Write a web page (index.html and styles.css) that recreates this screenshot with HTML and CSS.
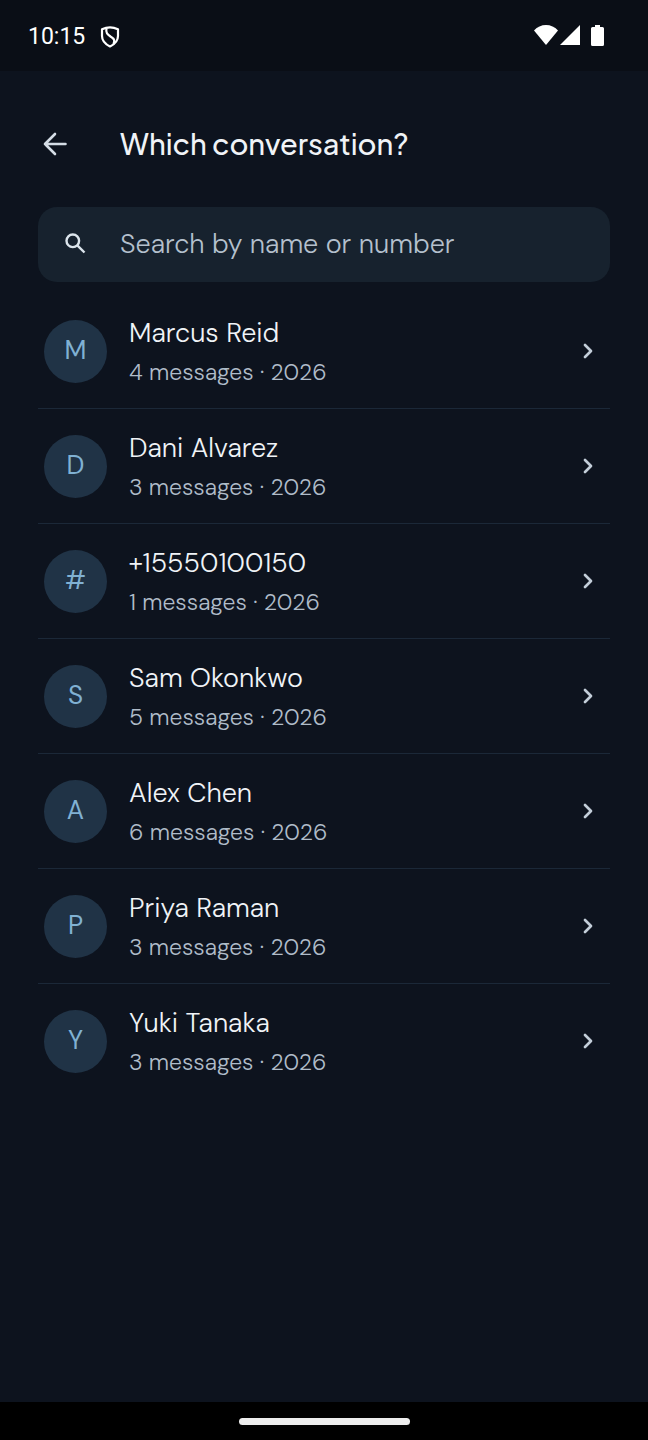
FILE: index.html
```
<!DOCTYPE html>
<html lang="en">
<head>
<meta charset="utf-8">
<meta name="viewport" content="width=device-width, initial-scale=1">
<title>Which conversation?</title>
<link rel="stylesheet" href="styles.css">
</head>
<body>
<svg class="sprite" aria-hidden="true">
  <symbol id="chevron" viewBox="0 0 24 24"><path d="M9 6l6 6-6 6" fill="none" stroke="currentColor" stroke-width="2.7" stroke-linecap="round" stroke-linejoin="round"/></symbol>
</svg>
<div class="status-bar">
  <span class="clock">10:15</span>
  <svg class="shield" viewBox="0 0 20 22" fill="none" stroke="currentColor" stroke-width="2.2" stroke-linejoin="round"><path d="M10 1.300Q14 1.300 18 3.300V10Q18 16.500 10 20.500Q2 16.500 2 10V3.300Q6 1.300 10 1.300Z"/><path d="M6.500 2.500C5.500 7 7.500 8.500 10.500 10.500C14.500 13 15 14.500 13.500 18"/></svg>
  <div class="system-icons">
    <svg class="wifi" viewBox="0 0 24 20" fill="currentColor"><path d="M0 5.500Q5 0 12 0T24 5.500L12 20Z"/></svg>
    <svg class="signal" viewBox="0 0 20 20" fill="currentColor"><path d="M20 0V20H0Z"/></svg>
    <svg class="battery" viewBox="0 0 13 21" fill="currentColor"><path d="M4 0H9V2H11.500Q13 2 13 3.500V19.500Q13 21 11.500 21H1.500Q0 21 0 19.500V3.500Q0 2 1.500 2H4Z"/></svg>
  </div>
</div>
<main class="screen">
  <header class="app-bar">
    <button class="back" type="button" aria-label="Back"><svg viewBox="0 0 24 24" fill="none" stroke="currentColor" stroke-width="2.6" stroke-linecap="round" stroke-linejoin="round"><path d="M12 2L2 12L12 22M2 12H22.500"/></svg></button>
    <h1 class="title">Which conversation?</h1>
  </header>
  <label class="search">
    <svg viewBox="0 0 21 21" fill="none" stroke="currentColor" stroke-width="2.400"><circle cx="7.800" cy="7.800" r="6.300"/><path d="M12.300 12.300L19.500 19.500"/></svg>
    <input class="search-input" type="text" placeholder="Search by name or number" aria-label="Search by name or number">
  </label>
  <ul class="list">
    <li class="item"><button class="row" type="button"><span class="avatar">M</span><span class="info"><span class="name">Marcus Reid</span><span class="meta">4 messages · 2026</span></span><svg class="chevron"><use href="#chevron"/></svg></button></li>
    <li class="item"><button class="row" type="button"><span class="avatar">D</span><span class="info"><span class="name">Dani Alvarez</span><span class="meta">3 messages · 2026</span></span><svg class="chevron"><use href="#chevron"/></svg></button></li>
    <li class="item"><button class="row" type="button"><span class="avatar">#</span><span class="info"><span class="name">+15550100150</span><span class="meta">1 messages · 2026</span></span><svg class="chevron"><use href="#chevron"/></svg></button></li>
    <li class="item"><button class="row" type="button"><span class="avatar">S</span><span class="info"><span class="name">Sam Okonkwo</span><span class="meta">5 messages · 2026</span></span><svg class="chevron"><use href="#chevron"/></svg></button></li>
    <li class="item"><button class="row" type="button"><span class="avatar">A</span><span class="info"><span class="name">Alex Chen</span><span class="meta">6 messages · 2026</span></span><svg class="chevron"><use href="#chevron"/></svg></button></li>
    <li class="item"><button class="row" type="button"><span class="avatar">P</span><span class="info"><span class="name">Priya Raman</span><span class="meta">3 messages · 2026</span></span><svg class="chevron"><use href="#chevron"/></svg></button></li>
    <li class="item"><button class="row" type="button"><span class="avatar">Y</span><span class="info"><span class="name">Yuki Tanaka</span><span class="meta">3 messages · 2026</span></span><svg class="chevron"><use href="#chevron"/></svg></button></li>
  </ul>
</main>
<div class="nav-bar"><div class="handle"></div></div>
</body>
</html>
```
FILE: styles.css
```
* { box-sizing: border-box; }
body {
  margin: 0;
  min-height: 100vh;
  display: flex;
  flex-direction: column;
  background: #0d131e;
  color: #f0f3f7;
  font-family: "DM Sans", Inter, sans-serif;
}
button, input { font: inherit; color: inherit; background: none; border: 0; padding: 0; }
svg { display: block; flex: none; }
.sprite { position: absolute; width: 0; height: 0; }
.status-bar {
  display: flex;
  align-items: center;
  height: 71px;
  padding: 2px 44px 0 28px;
  background: #0a0e16;
  color: #fff;
}
.clock { font: 23px/28px Roboto, sans-serif; }
.shield { width: 20px; height: 22px; margin-left: 15px; }
.system-icons { display: flex; gap: 2px; margin-left: auto; padding-bottom: 2px; }
.wifi { width: 24px; height: 20px; }
.signal { width: 20px; height: 20px; }
.battery { width: 13px; height: 21px; margin-left: 9px; }
.screen { flex: 1; padding: 36px 38px 0; }
.app-bar { display: flex; align-items: center; height: 74px; }
.back { width: 24px; height: 24px; margin-left: 5px; color: #d5dde6; }
.title {
  margin: 0 0 0 53px;
  font: 500 29px/40px "Plus Jakarta Sans", Inter, sans-serif;
  padding-bottom: 2px;
}
.search {
  display: flex;
  align-items: center;
  height: 75px;
  margin-top: 26px;
  padding: 0 27px 2px;
  border-radius: 19px;
  background: #17222e;
}
.search svg { width: 21px; height: 21px; color: #dce5ec; }
.search-input { flex: 1; min-width: 0; margin-left: 34px; font-size: 27px; font-weight: 300; line-height: 36px; outline: 0; }
.search-input::placeholder { color: #b4c0cd; opacity: 1; }
.list { list-style: none; margin: 12px 0 0; padding: 0; }
.item { border-bottom: 1px solid #1b2838; }
.item:last-child { border-bottom: 0; }
.row {
  display: flex;
  align-items: center;
  width: 100%;
  height: 114px;
  padding: 0 10px 0 6px;
  text-align: left;
}
.avatar {
  display: grid;
  place-items: center;
  flex: none;
  width: 63px;
  height: 63px;
  padding-bottom: 2px;
  border-radius: 50%;
  background: #203346;
  color: #80b1d3;
  font-size: 26px;
  font-weight: 400;
}
.info { display: flex; flex-direction: column; gap: 4px; flex: 1; margin-left: 22px; padding-top: 2px; font-weight: 300; }
.name { font-size: 27px; line-height: 36px; }
.meta { font-size: 23px; line-height: 34px; color: #b0bcc9; }
.chevron { width: 24px; height: 24px; color: #c3ced9; }
.nav-bar { display: flex; align-items: center; justify-content: center; height: 38px; background: #000; }
.handle { width: 171px; height: 7px; border-radius: 4px; background: #ededed; }
```
